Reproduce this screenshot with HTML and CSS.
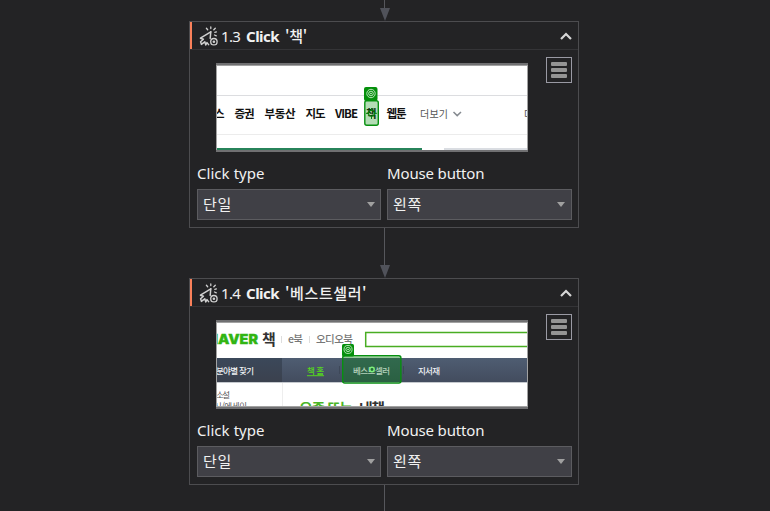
FILE: index.html
```html
<!DOCTYPE html>
<html lang="ko">
<head>
<meta charset="utf-8">
<title>Click</title>
<link rel="stylesheet" href="styles.css">
</head>
<body>
<svg class="defs" width="0" height="0">
  <defs>
    <symbol id="click-icon" viewBox="0 0 20 20">
      <g fill="none" stroke="#d0d0d0" stroke-width="1.5" stroke-linejoin="round" stroke-linecap="round">
        <path d="M11.8 5.8L1.4 12.2L4.4 13.2L1.6 15.8L2.4 18.4L5.8 15.8L6.8 18.9L8 16.6L9.6 18.6"/>
        <path d="M11.8 5.8L11.2 12.4"/>
        <circle cx="14.9" cy="15.7" r="3.2" stroke-width="1.3"/>
        <path d="M11.8 1v1.6M7.4 2.2l1.3 1.5M16.3 2.2l-1.5 1.6M15.8 6.4l1.6-.5M15.5 9l1.8.8" stroke-width="1.3"/>
      </g>
      <circle cx="14.9" cy="15.7" r="1.3" fill="#d0d0d0"/>
    </symbol>
    <symbol id="target" viewBox="0 0 12 12">
      <g fill="none" stroke="#dff5df" stroke-width=".8"><circle cx="6" cy="6" r="4.2"/><circle cx="6" cy="6" r="2.3"/></g>
      <circle cx="6" cy="6" r=".8" fill="#dff5df"/>
    </symbol>
    <linearGradient id="nav" x1="0" y1="0" x2="0" y2="1"><stop offset="0" stop-color="#4f5d72"/><stop offset="1" stop-color="#434c5e"/></linearGradient>
    <linearGradient id="nav-side" x1="0" y1="0" x2="0" y2="1"><stop offset="0" stop-color="#3b485a"/><stop offset="1" stop-color="#3b414e"/></linearGradient>
  </defs>
</svg>
<main class="flow">
  <div class="connector first"><i class="line"></i><i class="arrow"></i></div>
  <section class="card">
    <header class="head">
      <svg class="icon"><use href="#click-icon"/></svg>
      <span class="num">1.3</span><b class="name">Click</b><b class="target">'책'</b>
      <svg class="collapse" viewBox="0 0 12 8"><path d="M1 7L6 2L11 7" fill="none" stroke="#d6d6d6" stroke-width="2.2"/></svg>
    </header>
    <div class="preview">
      <svg class="thumb" viewBox="216 63 312 89">
        <rect x="216" y="63" width="312" height="89" fill="#fff"/>
        <path d="M217 95.5H527" stroke="#dcdde0"/><path d="M217 134.5H527" stroke="#ececec"/>
        <rect x="217" y="148" width="205" height="2" fill="#27835a"/><rect x="444" y="148" width="83" height="2" fill="#dadde2"/>
        <g class="menu">
          <text x="214" y="118" textLength="11">스</text>
          <text x="234.5" y="118" textLength="20">증권</text>
          <text x="264.5" y="118" textLength="31">부동산</text>
          <text x="305.5" y="118" textLength="20">지도</text>
          <text x="335" y="118" textLength="23">VIBE</text>
          <text x="366" y="118">책</text>
          <text x="386.5" y="118" textLength="20">웹툰</text>
        </g>
        <g class="more"><text x="420" y="118" textLength="28">더보기</text><text x="524" y="118">더</text></g>
        <path d="M453.5 112L457.2 115.6L461 112" fill="none" stroke="#858a90" stroke-width="1.5"/>
        <rect x="364.8" y="100.7" width="13.5" height="24.6" rx="2" fill="#068a0b" fill-opacity=".3" stroke="#079010" stroke-width="1.4"/>
        <circle cx="371.5" cy="113.3" r="3" fill="none" stroke="#07800c" stroke-width="1.1"/><path d="M371.5 108v3M371.5 116v3M366 113.3h3M374 113.3h3" stroke="#07800c"/>
        <rect x="364" y="87" width="13.5" height="14" rx="2" fill="#04900b"/><use href="#target" x="365" y="87.5" width="12" height="12"/>
        <path d="M216 63h312v2h-312zM216 150h312v2h-312z" fill="#707072"/><path d="M216.5 65v85M527.5 65v85M216 65.5h312" stroke="#a2a2a2"/>
      </svg>
      <button class="options"><i></i><i></i><i></i></button>
    </div>
    <div class="fields">
      <div class="field"><span class="label click">Click type</span><div class="select"><span>단일</span></div></div>
      <div class="field"><span class="label mouse">Mouse button</span><div class="select"><span>왼쪽</span></div></div>
    </div>
  </section>
  <div class="connector"><i class="line"></i><i class="arrow"></i></div>
  <section class="card">
    <header class="head">
      <svg class="icon"><use href="#click-icon"/></svg>
      <span class="num">1.4</span><b class="name">Click</b><b class="target long">'베스트셀러'</b>
      <svg class="collapse" viewBox="0 0 12 8"><path d="M1 7L6 2L11 7" fill="none" stroke="#d6d6d6" stroke-width="2.2"/></svg>
    </header>
    <div class="preview">
      <svg class="thumb" viewBox="216 320 312 89">
        <rect x="216" y="320" width="312" height="89" fill="#fff"/>
        <text class="logo" x="207" y="343.5" textLength="51" lengthAdjust="spacingAndGlyphs">NAVER</text>
        <text class="logo-book" x="262" y="345">책</text>
        <path d="M281.5 336v7M309.5 336v7" stroke="#ddd"/>
        <g class="service"><text x="288" y="343" textLength="15">e북</text><text x="316" y="343" textLength="37">오디오북</text></g>
        <rect x="365.7" y="332.5" width="170" height="14" fill="none" stroke="#49ad23" stroke-width="1.5"/>
        <rect x="217" y="358" width="310" height="24" fill="url(#nav)"/><rect x="217" y="358" width="65" height="24" fill="url(#nav-side)"/>
        <path d="M217 382.5H527" stroke="#c5c9ce"/><path d="M282.5 383V408" stroke="#eee"/><path d="M339.5 366v8M403.5 366v8" stroke="#3e4859"/>
        <g class="tab"><text x="216" y="373.5" textLength="38">분야별 찾기</text><text class="active" x="307" y="373.5" textLength="17">책 홈</text><text x="418" y="373.5" textLength="22">지서재</text></g>
        <path d="M307 375.7H324" stroke="#55d51e"/>
        <g class="category"><text x="216" y="398" textLength="14">소설</text><text x="214" y="409" textLength="33">시/에세이</text></g>
        <g class="headline"><text x="299" y="414" textLength="54">요즘 뜨는</text><text class="dark" x="359" y="414" textLength="26">내책</text></g>
        <rect x="342.7" y="355.8" width="58.2" height="27.3" rx="2" fill="#0b7c1e" fill-opacity=".43" stroke="#079010" stroke-width="1.4"/><path d="M345 356.9H399" stroke="#96d296" stroke-width=".8"/>
        <text class="tab muted" x="353" y="373.5" textLength="37">베스트셀러</text>
        <circle cx="372" cy="369.5" r="2.2" fill="#256b38" stroke="#7cf07c" stroke-width="1.5"/>
        <rect x="342" y="344" width="12" height="12.5" rx="1.5" fill="#04900b"/><use href="#target" x="342.3" y="343.7" width="11.5" height="11.5"/>
        <path d="M216 320h312v2h-312zM216 407h312v2h-312z" fill="#707072"/><path d="M216.5 322v85M527.5 322v85M216 322.5h312M216 406.5h312" stroke="#a2a2a2"/>
      </svg>
      <button class="options"><i></i><i></i><i></i></button>
    </div>
    <div class="fields">
      <div class="field"><span class="label click">Click type</span><div class="select"><span>단일</span></div></div>
      <div class="field"><span class="label mouse">Mouse button</span><div class="select"><span>왼쪽</span></div></div>
    </div>
  </section>
  <div class="connector last"><i class="line"></i></div>
</main>
</body>
</html>
```
FILE: styles.css
```css
* { box-sizing: border-box; }
body { margin: 0; height: 511px; overflow: hidden; background: #232325; color: #f1f1f1; font: 15px/20px "Noto Sans", "Noto Sans CJK KR", sans-serif; }
.defs { position: absolute; }
.flow { width: 390px; margin-left: 189px; display: flex; flex-direction: column; }
.connector { height: 50px; width: 13px; margin-left: 189px; display: flex; flex-direction: column; align-items: center; }
.connector.first { height: 21px; }
.connector.last { height: 26px; }
.line { flex: 1; width: 1px; background: #56575c; }
.arrow { width: 0; height: 13px; border: solid transparent; border-width: 13px 5.5px 0; border-top-color: #50525a; }
.card { height: 207px; flex: none; border: 1px solid #4c4c4f; }
.head { height: 28px; border-bottom: 1px solid #343437; display: flex; align-items: center; padding-right: 6px; }
.head::before { content: ""; width: 2px; height: 27px; background: #f9805a; }
.icon { width: 20px; height: 20px; margin-left: 7px; }
.num { width: 25px; margin-left: 2px; letter-spacing: -.7px; }
.name { width: 38px; letter-spacing: -.5px; font-weight: 700; }
.target { margin-left: 1px; font-weight: 500; white-space: nowrap; letter-spacing: -.3px; font-family: "Noto Sans CJK KR", sans-serif; }
.target.long { letter-spacing: .6px; }
.collapse { width: 12px; height: 8px; margin-left: auto; }
.preview { display: flex; align-items: flex-start; padding: 7px 6px 0 26px; justify-content: space-between; height: 108px; }
.thumb { width: 312px; height: 89px; margin-top: 6px; flex: none; }
.options { width: 26px; height: 26px; border: 1px solid #9a9aa4; background: #232325; padding: 4px; display: flex; flex-direction: column; justify-content: space-between; }
.options i { height: 4px; border-radius: 1px; background: #949494; }
.fields { display: flex; gap: 6px; padding: 5px 6px 0 7px; }
.field { width: 184px; display: flex; flex-direction: column; }
.field + .field { width: 185px; }
.label { height: 26px; line-height: 20px; white-space: nowrap; }
.click { letter-spacing: .05px; }
.mouse { letter-spacing: -.15px; }
.select { height: 31px; border: 1px solid #5c5c60; background: #404046; padding: 0 5px 0 5px; display: flex; align-items: center; justify-content: space-between; font-family: "Noto Sans CJK KR", sans-serif; }
.field + .field .select { padding-right: 6px; }
.select span { padding-bottom: 2px; letter-spacing: .6px; }
.select::after { content: ""; border: solid transparent; border-width: 5px 4.5px 0; border-top-color: #a0a0a0; }
.thumb text { font-family: "Noto Sans CJK KR", sans-serif; }
.menu { font-size: 11.5px; font-weight: 700; fill: #111; }
.more { font-size: 10px; fill: #555; }
.thumb .logo { font: 900 12.5px Inter, "Open Sans", sans-serif; fill: #31b513; stroke: #31b513; stroke-width: .3px; }
.logo-book { font-size: 15px; font-weight: 700; fill: #333; }
.service { font-size: 10.5px; fill: #777; font-weight: 500; }
.tab { font-size: 8.5px; font-weight: 500; fill: #eef0f3; }
.active { fill: #55d51e; }
.muted { fill: #b5d3bd; }
.category { font-size: 8.5px; fill: #555; }
.headline { font-size: 15px; font-weight: 700; fill: #4ab526; }
.dark { fill: #333; }
```
